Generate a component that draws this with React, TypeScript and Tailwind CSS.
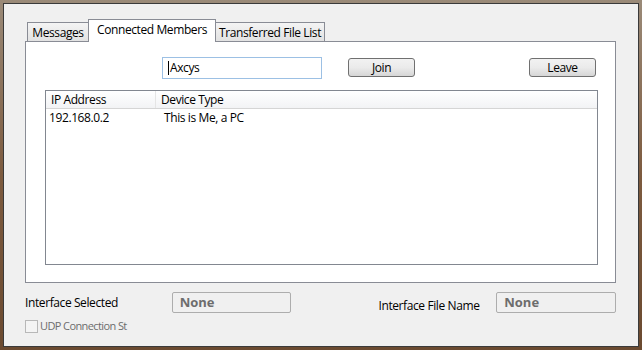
import React from "react";

const font = {
  fontFamily: '"Open Sans", "Noto Sans", "Liberation Sans", sans-serif',
  letterSpacing: "-0.4px",
};

function Tab({ label, active, w }: { label: string; active?: boolean; w: string }) {
  if (active) {
    return (
      <div
        className={`${w} relative z-10 -mx-px h-[23px] whitespace-nowrap border border-b-0 border-[#898c95] bg-white pt-[1px] text-center text-[12px] leading-[18px] text-black`}
      >
        {label}
      </div>
    );
  }
  return (
    <div
      className={`${w} mb-px h-[19px] whitespace-nowrap border border-b-0 border-[#898c95] bg-gradient-to-b from-[#f4f4f4] to-[#e2e2e2] text-center text-[12px] leading-[19px] text-black`}
    >
      {label}
    </div>
  );
}

function Button({ label }: { label: string }) {
  return (
    <div className="flex h-[19px] w-[67px] items-center justify-center rounded-[3px] border border-[#707070] bg-gradient-to-b from-[#f2f2f2] via-[#ebebeb] to-[#d6d6d6] text-[12px] text-black">
      {label}
    </div>
  );
}

function NoneBox() {
  return (
    <div className="flex h-[21px] w-[120px] items-center rounded-[2px] border border-[#adadad] bg-[#f0f0f0] pl-[7px] text-[13px] font-bold tracking-normal text-[#6d6d6d]">
      None
    </div>
  );
}

export default function App() {
  return (
    <div
      className="h-[350px] w-[642px] bg-gradient-to-b from-[#9a8a78] via-[#7d5b3f] to-[#6b4a30] p-[3px]"
      style={font}
    >
      <div className="h-[344px] w-[636px] border border-[#3a3a3a] bg-[#f0f0f0]">
        <div className="ml-[21px] mt-[15px] w-[591px]">
          {/* tab strip */}
          <div className="-mb-px flex h-[23px] items-end pl-[2px]">
            <Tab label="Messages" w="w-[62px]" />
            <Tab label="Connected Members" active w="w-[128px]" />
            <Tab label="Transferred File List" w="w-[110px]" />
          </div>

          {/* tab panel */}
          <div className="h-[242px] border border-[#898c95] bg-white">
            <div className="ml-[136px] mt-[15px] flex items-start">
              <div className="flex h-[22px] w-[160px] items-center border border-[#9cc0e4] pl-[5px] text-[12px] text-black">
                <span className="mr-px inline-block h-[14px] w-px bg-black" />
                Axcys
              </div>
              <div className="ml-[26px] mt-[1px]">
                <Button label="Join" />
              </div>
              <div className="ml-[114px] mt-[1px]">
                <Button label="Leave" />
              </div>
            </div>

            <div className="ml-[19px] mt-[11px] h-[175px] w-[553px] border border-[#828790] bg-white">
              <div className="flex h-[18px] border-b border-[#d5d5d5] bg-gradient-to-b from-white to-[#f2f3f5] text-[12px] leading-[17px] text-black">
                <div className="w-[110px] border-r border-[#e5e5e5] pl-[5px]">IP Address</div>
                <div className="pl-[5px]">Device Type</div>
              </div>
              <div className="flex h-[17px] text-[12px] leading-[17px] text-black">
                <div className="w-[118px] pl-[3px]">192.168.0.2</div>
                <div>This is Me, a PC</div>
              </div>
            </div>
          </div>

          {/* bottom area */}
          <div className="mt-[9px] flex items-start">
            <div className="w-[147px] whitespace-nowrap pt-[2px] text-[12px] leading-[18px] text-black">
              Interface Selected
            </div>
            <NoneBox />
            <div className="ml-[87px] w-[118px] whitespace-nowrap pt-[5px] text-[12px] leading-[18px] text-black">
              Interface File Name
            </div>
            <NoneBox />
          </div>
          <div className="mt-[4px] flex items-center">
            <div className="h-[13px] w-[13px] border border-[#b8b8b8] bg-[#f4f4f4]" />
            <span className="ml-[2px] whitespace-nowrap text-[11px] leading-[14px] tracking-[-0.6px] text-[#6d6d6d]">
              UDP Connection St
            </span>
          </div>
        </div>
      </div>
    </div>
  );
}
